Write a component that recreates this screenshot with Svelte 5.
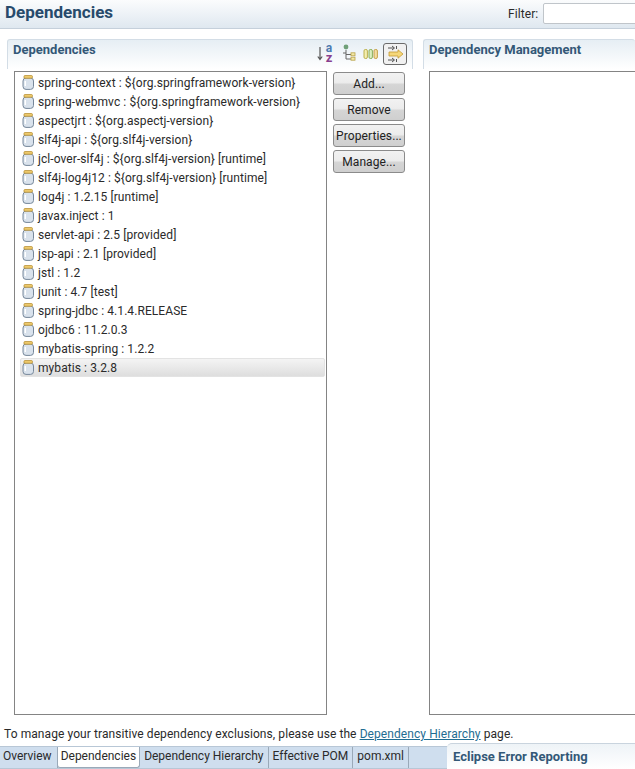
<script>
  const deps = [
    "spring-context : ${org.springframework-version}",
    "spring-webmvc : ${org.springframework-version}",
    "aspectjrt : ${org.aspectj-version}",
    "slf4j-api : ${org.slf4j-version}",
    "jcl-over-slf4j : ${org.slf4j-version} [runtime]",
    "slf4j-log4j12 : ${org.slf4j-version} [runtime]",
    "log4j : 1.2.15 [runtime]",
    "javax.inject : 1",
    "servlet-api : 2.5 [provided]",
    "jsp-api : 2.1 [provided]",
    "jstl : 1.2",
    "junit : 4.7 [test]",
    "spring-jdbc : 4.1.4.RELEASE",
    "ojdbc6 : 11.2.0.3",
    "mybatis-spring : 1.2.2",
    "mybatis : 3.2.8"
  ];
  const buttons = ["Add...", "Remove", "Properties...", "Manage..."];
  const tabs = ["Overview", "Dependencies", "Dependency Hierarchy", "Effective POM", "pom.xml"];
</script>

<div class="page">
  <header class="top">
    <h1>Dependencies</h1>
    <div class="filter">
      <span>Filter:</span>
      <div class="filter-input"></div>
    </div>
  </header>

  <main class="columns">
    <section class="left">
      <div class="section-title">
        <h2>Dependencies</h2>
        <div class="tools">
          <div class="sort">
            <svg width="6" height="18" viewBox="0 0 6 18">
              <path d="M3 3v12M.8 12.5 3 15.5l2.2-3" fill="none" stroke="#555" stroke-width="1.2" />
            </svg>
            <div class="az">
              <span class="az-a">a</span>
              <span class="az-z">z</span>
            </div>
          </div>
          <svg class="tree-icon" width="14" height="18" viewBox="0 0 14 18">
            <circle cx="4" cy="3" r="2.4" fill="#6f9f78" />
            <path d="M4 6v9h5M1 9h3M4 10.5h5" fill="none" stroke="#666" stroke-width="1" />
            <rect x="9" y="8.8" width="4" height="3" fill="#f3e9a6" stroke="#b9a24a" stroke-width="0.8" />
            <rect x="9" y="13.2" width="4" height="3" fill="#f3e9a6" stroke="#b9a24a" stroke-width="0.8" />
          </svg>
          <svg class="cols-icon" width="16" height="18" viewBox="0 0 16 18">
            <rect x="1" y="4.5" width="3.4" height="9" rx="1.4" fill="#f4eeb0" stroke="#b5a83d" stroke-width="0.9" />
            <rect x="6" y="4.5" width="3.4" height="9" rx="1.4" fill="#dcefc0" stroke="#7fa64a" stroke-width="0.9" />
            <rect x="11" y="4.5" width="3.4" height="9" rx="1.4" fill="#f4dca0" stroke="#c09a3a" stroke-width="0.9" />
          </svg>
          <div class="tool-on">
            <svg width="18" height="18" viewBox="0 0 18 18">
              <path d="M2 3h6M6 1l2.5 2L6 5M2 15h6M6 13l2.5 2L6 17M10.5 1v3M10.5 14v3" fill="none" stroke="#555" stroke-width="1" />
              <path d="M3 7h9V4.8L17 9l-5 4.2V11H3z" fill="#f5d77a" stroke="#c49a32" stroke-width="0.8" />
            </svg>
          </div>
        </div>
      </div>
      <div class="left-body">
        <ul class="tree">
          {#each deps as dep, i}
            <li class:selected={i === deps.length - 1}>
              <svg class="jar" width="13" height="15" viewBox="0 0 13 15">
                <rect x="1" y="3" width="10.5" height="11.4" rx="3" fill="#d9e2ec" stroke="#76879a" />
                <path d="M3.3 6v5" stroke="#fff" stroke-width="1.4" />
                <rect x="2" y="0.6" width="8.4" height="2.6" rx="0.8" fill="#f2cf73" stroke="#b48a2c" stroke-width="0.8" />
              </svg>
              <span>{dep}</span>
            </li>
          {/each}
        </ul>
        <div class="buttons">
          {#each buttons as b}
            <button type="button">{b}</button>
          {/each}
        </div>
      </div>
    </section>

    <section class="right">
      <div class="section-title">
        <h2>Dependency Management</h2>
      </div>
      <div class="right-body">
        <div class="mgmt"></div>
      </div>
    </section>
  </main>

  <p class="note">
    To manage your transitive dependency exclusions, please use the
    <a href="#hierarchy">Dependency Hierarchy</a> page.
  </p>

  <footer class="bottom">
    <nav class="tabs">
      {#each tabs as t, i}
        <div class="tab" class:active={i === 1}>{t}</div>
      {/each}
      <div class="tab-fill"></div>
    </nav>
    <div class="error-tab">Eclipse Error Reporting</div>
  </footer>
</div>

<style>
  :global(body) {
    margin: 0;
    background: #fff;
    overflow: hidden;
  }

  .page {
    width: 635px;
    height: 769px;
    display: flex;
    flex-direction: column;
    overflow: hidden;
    font-family: Roboto, "Noto Sans CJK KR", sans-serif;
    font-size: 12px;
    letter-spacing: 0.08px;
    color: #2a2a2a;
  }

  .top {
    height: 28px;
    flex: none;
    display: flex;
    align-items: center;
    justify-content: space-between;
    padding-left: 5px;
    background: linear-gradient(to bottom, #fbfcfd, #dfe8f0);
    border-bottom: 1px solid #c5d0db;
  }

  h1 {
    margin: 0 0 4px;
    font-size: 17px;
    font-weight: 700;
    letter-spacing: 0;
    color: #274a6b;
  }

  .filter {
    display: flex;
    align-items: center;
    gap: 5px;
    flex: none;
    width: 127px;
    margin-bottom: 1px;
  }

  .filter-input {
    flex: none;
    width: 100px;
    height: 19px;
    background: #fff;
    border: 1px solid #c0c5ca;
    border-radius: 2px;
  }

  .columns {
    display: flex;
    height: 686px;
    flex: none;
    padding: 10px 0 0 7px;
    box-sizing: border-box;
    gap: 10px;
  }

  .left {
    width: 406px;
    flex: none;
    display: flex;
    flex-direction: column;
  }

  .right {
    flex: 1;
    min-width: 0;
    display: flex;
    flex-direction: column;
  }

  .section-title {
    height: 30px;
    flex: none;
    box-sizing: border-box;
    display: flex;
    justify-content: space-between;
    padding: 0 5px;
    border: 1px solid #d3dde6;
    border-bottom: 0;
    border-radius: 3px 3px 0 0;
    background: linear-gradient(to bottom, #e6eef4, #fff);
  }

  .right .section-title {
    border-right: 0;
  }

  h2 {
    margin: 1px 0 0;
    font-size: 13px;
    line-height: 18px;
    font-weight: 700;
    letter-spacing: 0;
    color: #335877;
  }

  .tools {
    display: flex;
    align-items: flex-start;
    padding-top: 3px;
  }

  .sort {
    display: flex;
    gap: 1px;
    margin-top: 1px;
  }

  .az {
    width: 10px;
    display: flex;
    flex-direction: column;
    font-weight: 700;
    letter-spacing: 0;
  }

  .az span {
    display: block;
    height: 9px;
    text-align: center;
  }

  .az-a {
    font-size: 12px;
    line-height: 9px;
    color: #4d7ab0;
  }

  .az-z {
    font-size: 13px;
    line-height: 9px;
    color: #8a3f8f;
  }

  .tree-icon {
    margin: 1px 0 0 8px;
  }

  .cols-icon {
    margin: 2px 0 0 7px;
  }

  .tool-on {
    width: 22px;
    height: 20px;
    margin-left: 4px;
    display: flex;
    align-items: center;
    justify-content: center;
    border: 1px solid #6b6b6b;
    border-radius: 3px;
    background: #f1f1f1;
  }

  .left-body {
    flex: 1;
    display: flex;
    gap: 6px;
    padding: 2px 0 0 7px;
    min-height: 0;
  }

  .tree {
    list-style: none;
    margin: 0;
    padding: 1px 0 0 4px;
    width: 313px;
    flex: none;
    box-sizing: border-box;
    border: 1px solid #848484;
    background: #fff;
  }

  .tree li {
    height: 19px;
    display: flex;
    align-items: center;
    gap: 3px;
    padding-left: 3px;
    white-space: nowrap;
    box-sizing: border-box;
  }

  .tree li.selected {
    background: linear-gradient(to bottom, #f4f4f4, #dedede);
    border: 1px solid #e3e3e3;
    border-radius: 2px;
    margin: 0 1px;
    padding-left: 1px;
  }

  .jar {
    flex: none;
  }

  .buttons {
    display: flex;
    flex-direction: column;
    gap: 3px;
    padding-top: 1px;
  }

  button {
    width: 72px;
    height: 23px;
    padding: 0;
    font: inherit;
    letter-spacing: inherit;
    color: #222;
    border: 1px solid #8b8b8b;
    border-radius: 3px;
    background: linear-gradient(to bottom, #f2f2f2 0%, #ececec 45%, #d5d5d5 55%, #cfcfcf 100%);
  }

  .right-body {
    flex: 1;
    padding: 2px 0 0 6px;
    min-height: 0;
  }

  .mgmt {
    height: 100%;
    box-sizing: border-box;
    border: 1px solid #848484;
    border-right: 0;
    background: #fff;
  }

  .note {
    margin: 0;
    height: 27px;
    flex: none;
    box-sizing: border-box;
    padding: 12px 0 0 4px;
    line-height: 15px;
    white-space: nowrap;
  }

  a {
    color: #1f6d92;
    text-decoration: underline;
  }

  .bottom {
    flex: 1;
    display: flex;
    min-height: 0;
  }

  .tabs {
    width: 447px;
    flex: none;
    display: flex;
    height: 23px;
    margin-top: 4px;
    box-sizing: border-box;
    background: #cfdeee;
    border-top: 1px solid #b8c7d6;
    border-bottom: 1px solid #b8c7d6;
    letter-spacing: 0;
  }

  .tab {
    padding: 0 4px;
    line-height: 18px;
    border-right: 1px solid #9aa9b8;
    white-space: nowrap;
  }

  .tab:first-child {
    padding-left: 3px;
    padding-right: 5px;
  }

  .tab.active {
    background: #fff;
    border: 1px solid #9aa9b8;
    border-top: 0;
    border-radius: 0 0 3px 3px;
    height: 20px;
    padding: 0 3px;
    margin-left: -1px;
  }

  .tab-fill {
    flex: 1;
  }

  .error-tab {
    flex: 1;
    margin-top: 1px;
    padding-left: 6px;
    line-height: 25px;
    font-weight: 700;
    font-size: 13px;
    letter-spacing: 0;
    color: #335877;
    background: linear-gradient(to bottom, #eef3f7, #fff);
    border-top: 1px solid #c9d4de;
    border-top-left-radius: 5px;
  }
</style>
